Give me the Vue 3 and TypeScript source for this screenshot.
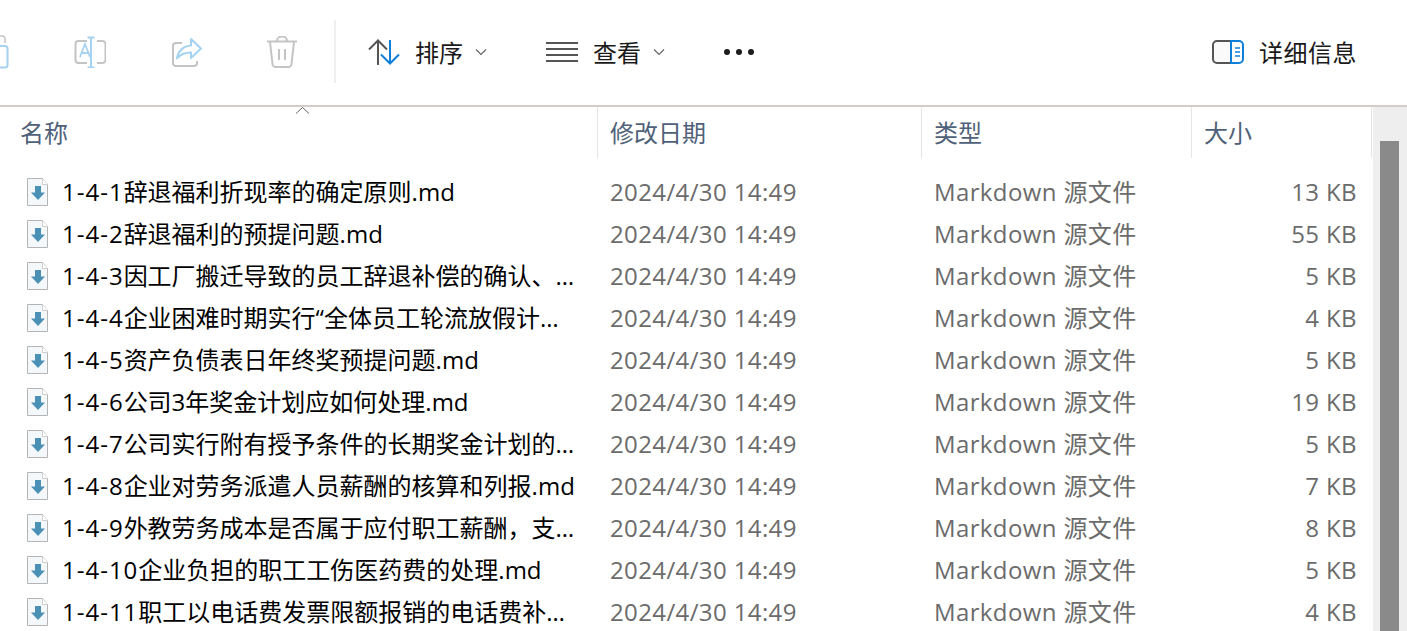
<script setup lang="ts">
interface FileRow { name: string; size: string }
const files: FileRow[] = [
  { name: '1-4-1辞退福利折现率的确定原则.md', size: '13 KB' },
  { name: '1-4-2辞退福利的预提问题.md', size: '55 KB' },
  { name: '1-4-3因工厂搬迁导致的员工辞退补偿的确认、…', size: '5 KB' },
  { name: '1-4-4企业困难时期实行“全体员工轮流放假计…', size: '4 KB' },
  { name: '1-4-5资产负债表日年终奖预提问题.md', size: '5 KB' },
  { name: '1-4-6公司3年奖金计划应如何处理.md', size: '19 KB' },
  { name: '1-4-7公司实行附有授予条件的长期奖金计划的…', size: '5 KB' },
  { name: '1-4-8企业对劳务派遣人员薪酬的核算和列报.md', size: '7 KB' },
  { name: '1-4-9外教劳务成本是否属于应付职工薪酬，支…', size: '8 KB' },
  { name: '1-4-10企业负担的职工工伤医药费的处理.md', size: '5 KB' },
  { name: '1-4-11职工以电话费发票限额报销的电话费补…', size: '4 KB' }
]
const prefix = (n: string): string => (n.match(/^[\d-]+/) ?? [''])[0]
const rest = (n: string): string => n.slice(prefix(n).length)
</script>

<template>
  <div class="window">
    <header class="toolbar">
      <svg class="ico paste" width="10" height="34" viewBox="0 0 10 34" fill="none">
        <path d="M0 1h2.500a2.500 2.500 0 0 1 2.500 2.500V8" stroke="#c4c4c4" stroke-width="1.500" />
        <path d="M0 11h5a2.500 2.500 0 0 1 2.500 2.500V30a2.500 2.500 0 0 1-2.500 2.500H0" stroke="#a6d2f2" stroke-width="2" />
      </svg>
      <svg class="ico rename" width="32" height="32" viewBox="0 0 32 32" fill="none">
        <path d="M13 5H4.500A3 3 0 0 0 1.500 8v16a3 3 0 0 0 3 3H13M23 5h5.500a3 3 0 0 1 3 3v16a3 3 0 0 1-3 3H23" stroke="#c4c4c4" stroke-width="2" />
        <path d="M17 2v29M13.500 1.500h7M13.500 31.500h7" stroke="#a6d2f2" stroke-width="2" />
        <path d="M6.500 22l5-13 5 13M8.200 18h6.600" stroke="#a6d2f2" stroke-width="1.800" transform="translate(-.5 -1)" />
      </svg>
      <svg class="ico share" width="32" height="32" viewBox="0 0 32 32" fill="none">
        <path d="M11 7H5a3 3 0 0 0-3 3v17a3 3 0 0 0 3 3h18a3 3 0 0 0 3-3v-2" stroke="#c4c4c4" stroke-width="2" />
        <path d="M20 3l10 9.500L20 22v-5.500c-6 0-10 1-14 6 1-7 6-12.500 14-13z" stroke="#a6d2f2" stroke-width="2" stroke-linejoin="round" />
      </svg>
      <svg class="ico trash" width="30" height="32" viewBox="0 0 30 32" fill="none" stroke="#c4c4c4" stroke-width="2">
        <path d="M0 5.500h30M3 6l2.500 22a3 3 0 0 0 3 3h13a3 3 0 0 0 3-3L27 6M10 5V4.500a5 4 0 0 1 10 0V5" />
        <path d="M12 13v11M18 13v11" />
      </svg>
      <span class="divider"></span>
      <svg class="ico sort" width="32" height="26" viewBox="0 0 32 26" fill="none" stroke-width="2">
        <path d="M10 26V2M1 10.500l9-9 9 9" stroke="#555" />
        <path d="M22 1v23M13 15.500l9 9 9-9" stroke="#0f7fd8" />
      </svg>
      <span class="label sort-label">排序</span>
      <svg class="chev" width="12" height="8" viewBox="0 0 12 8" fill="none"><path d="M1 1.500l5 5 5-5" stroke="#666" stroke-width="1.200" /></svg>
      <svg class="ico view" width="32" height="20" viewBox="0 0 32 20" fill="none" stroke="#555" stroke-width="2">
        <path d="M0 1h32M0 7h32M0 13h32M0 19h32" />
      </svg>
      <span class="label view-label">查看</span>
      <svg class="chev" width="12" height="8" viewBox="0 0 12 8" fill="none"><path d="M1 1.500l5 5 5-5" stroke="#666" stroke-width="1.200" /></svg>
      <span class="dots"><i></i><i></i><i></i></span>
      <svg class="ico details" width="32" height="24" viewBox="0 0 32 24" fill="none" stroke-width="2">
        <path d="M19 1H5a4 4 0 0 0-4 4v14a4 4 0 0 0 4 4h14" stroke="#555" fill="#fafafa" />
        <path d="M19 1h8a4 4 0 0 1 4 4v14a4 4 0 0 1-4 4h-8z" stroke="#0f7fd8" />
        <path d="M23 8h5M23 12h5M23 16h5" stroke="#0f7fd8" stroke-width="1.600" />
      </svg>
      <span class="label details-label">详细信息</span>
    </header>

    <div class="body">
      <main class="list">
        <div class="grid head">
          <span class="col name">名称<svg class="caret" width="15" height="7" viewBox="0 0 15 7" fill="none"><path d="M1 6.500l6.500-6 6.500 6" stroke="#666" /></svg></span>
          <span class="col date">修改日期</span>
          <span class="col type">类型</span>
          <span class="col size">大小</span>
        </div>
        <div class="rows">
          <div v-for="f in files" :key="f.name" class="grid row">
            <span class="col name">
              <svg width="24" height="28" viewBox="0 0 24 28" fill="none">
                <path d="M1.500.500H16.500l5 6V27.500H1.500z" fill="#f5f8fa" stroke="#b4b4b4" />
                <path d="M16.500.500V6.500h5" fill="#fff" stroke="#cfcfcf" />
                <path d="M9 8h6v6.500h4L12 22 5 14.500h4z" fill="#4b90b5" />
              </svg>
              <span class="fname"><span class="num">{{ prefix(f.name) }}</span>{{ rest(f.name) }}</span>
            </span>
            <span class="col date">2024/4/30 14:49</span>
            <span class="col type">Markdown 源文件</span>
            <span class="col size">{{ f.size }}</span>
          </div>
        </div>
      </main>
      <aside class="track"><div class="thumb"></div></aside>
    </div>
  </div>
</template>

<style>
html, body { margin: 0; background: #fff; overflow: hidden; }
</style>

<style scoped>
.window {
  width: 1407px;
  height: 631px;
  overflow: hidden;
  display: flex;
  flex-direction: column;
  font-family: "Open Sans", "Noto Sans CJK SC", sans-serif;
  font-size: 24px;
  color: #1a1a1a;
}
.toolbar {
  height: 107px;
  flex: none;
  box-sizing: border-box;
  padding-bottom: 2px;
  display: flex;
  align-items: center;
  border-bottom: 2px solid #d6cbc9;
}
.ico, .chev { flex: none; display: block; }
.rename { margin-left: 64px; }
.share { margin-left: 65px; }
.trash { margin-left: 64px; }
.divider { width: 2px; height: 63px; background: #efefef; margin: 0 0 0 37px; flex: none; }
.sort { margin-left: 32px; }
.label { line-height: 32px; white-space: nowrap; margin-top: 2px; }
.sort-label { margin-left: 15px; margin-right: 12px; }
.view { margin-left: 59px; }
.view-label { margin-left: 15px; margin-right: 12px; }
.dots { display: flex; gap: 6px; margin-left: 59px; margin-right: 458px; flex: none; }
.dots i { width: 6px; height: 6px; border-radius: 50%; background: #1c1c1c; display: block; }
.details { margin-right: 15px; }
.details-label { letter-spacing: .5px; }

.body { flex: 1; min-height: 0; display: flex; }
.list { width: 1372px; flex: none; }
.grid { display: grid; grid-template-columns: 598px 324px 270px 180px; }
.head { height: 51px; }
.head .col {
  color: #4f6178;
  border-right: 1px solid #e5e5e5;
  display: flex;
  align-items: center;
  height: 51px;
  padding: 0 0 3px 12px;
  box-sizing: border-box;
  position: relative;
}
.head .name { padding-left: 20px; }
.caret { position: absolute; left: 295px; top: 0; }
.rows { padding-top: 13px; }
.row { height: 42px; align-items: center; line-height: 42px; }
.row .col { white-space: nowrap; padding-left: 12px; color: #6b6b6b; letter-spacing: .38px; }
.row .name { display: flex; align-items: center; padding-left: 26px; color: #000; letter-spacing: 0; }
.row .name svg { flex: none; }
.fname { margin-left: 12px; overflow: hidden; white-space: nowrap; }
.num { letter-spacing: 1px; }
.row .size { text-align: right; padding: 0 15px 0 0; }
.track { flex: 1; margin-left: 1px; background: #eeeeee; padding: 34px 8px 0 7px; }
.thumb { height: 100%; background: #8a8a8a; }
</style>
